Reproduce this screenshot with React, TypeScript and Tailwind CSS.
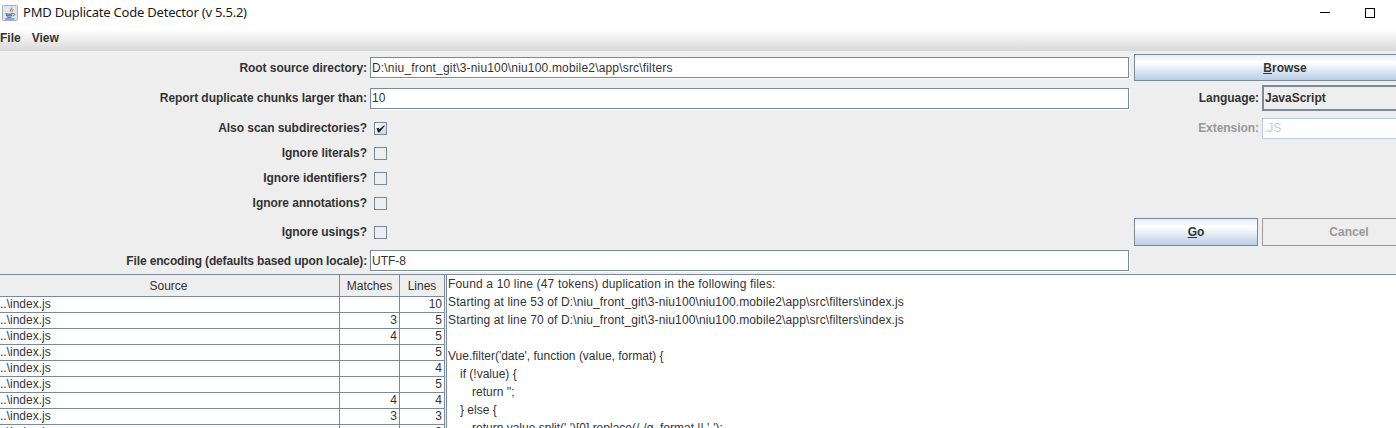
const labelClass = "flex items-center justify-end pr-[3px] text-[12px] font-bold tracking-[-0.05px] text-[#333333]";

const middleChecks = ["Ignore literals?", "Ignore identifiers?", "Ignore annotations?"];

const tableRows = [
  { matches: "", lines: "10" },
  { matches: "3", lines: "5" },
  { matches: "4", lines: "5" },
  { matches: "", lines: "5" },
  { matches: "", lines: "4" },
  { matches: "", lines: "5" },
  { matches: "4", lines: "4" },
  { matches: "3", lines: "3" },
  { matches: "", lines: "3" },
];

function JavaIcon() {
  return (
    <svg width="16" height="16" viewBox="0 0 16 16" className="shrink-0">
      <rect x="0.5" y="0.5" width="15" height="15" rx="1" fill="#dfe6ef" stroke="#9fb0c4" />
      <path d="M9 1.5 C10.5 3.5 6.5 4.5 8.5 7.5 C8 5.5 12 4.5 9 1.5 Z" fill="#e8702a" />
      <path d="M11 4 C11.5 5.5 9.5 6 10.2 7.5" fill="none" stroke="#e8702a" strokeWidth="0.9" />
      <path d="M3.5 8.5 C5 9.5 9 9.5 10.5 8.5 M4 10.2 C6 11 8 11 10 10.2 M5 12 C6.5 12.6 8 12.6 9.5 12" fill="none" stroke="#3f6b9e" strokeWidth="1.1" />
      <path d="M10.5 8.5 C13.5 8 13.5 10.5 10.5 11" fill="none" stroke="#3f6b9e" strokeWidth="0.9" />
      <path d="M3 14 H12.5" stroke="#3f6b9e" strokeWidth="1" />
    </svg>
  );
}

function CheckBox({ checked }: { checked: boolean }) {
  return (
    <span
      className={`flex h-[13px] w-[13px] items-center justify-center border border-[#7a8a99] ${
        checked ? "bg-gradient-to-br from-[#ffffff] to-[#c0d4e8]" : "bg-[#eeeeee]"
      }`}
    >
      {checked ? (
        <svg width="11" height="11" viewBox="0 0 11 11">
          <path d="M1.5 5 L4 5 L4.4 6.2 L9.5 2 L9.5 3.2 L4.4 9.5 L3 9.5 Z" fill="#222222" />
        </svg>
      ) : null}
    </span>
  );
}

function TextField({ value, spacing }: { value: string; spacing?: string }) {
  return (
    <div className={`flex h-[21px] items-center border border-[#7a8a99] bg-white pl-[1px] text-[12px] text-[#333333] shadow-[1px_1px_0_#ffffff] ${spacing ?? ""}`}>
      {value}
    </div>
  );
}

function MetalButton({ children }: { children: React.ReactNode }) {
  return (
    <button className="flex h-full w-full items-center justify-center border border-[#7a8a99] bg-gradient-to-b from-[#e6edf5] via-[#ffffff] via-30% to-[#b8cfe5] text-[12px] font-bold text-[#333333]">
      {children}
    </button>
  );
}

export default function App() {
  return (
    <div className="h-[428px] w-[1396px] overflow-hidden bg-[#eeeeee] font-['Liberation_Sans',Arial,sans-serif]">
      <div className="flex h-[26px] items-center bg-white pb-[1px] pl-[2px]">
        <JavaIcon />
        <span className="ml-[5px] font-['Noto_Sans',sans-serif] text-[13px] tracking-[-0.22px] text-[#1a1a1a]">
          PMD Duplicate Code Detector (v 5.5.2)
        </span>
        <div className="ml-auto flex items-center pr-[21px]">
          <span className="mr-[35px] h-[1px] w-[10px] bg-black" />
          <span className="h-[10px] w-[10px] border border-black" />
        </div>
      </div>

      <div className="flex h-[25px] items-center gap-[11px] border-b border-[#d8d8d8] bg-gradient-to-b from-[#ffffff] from-15% to-[#dadada] pb-[1px] text-[12px] font-bold text-[#333333]">
        <span>File</span>
        <span>View</span>
      </div>

      <div className="grid grid-cols-[370px_764px_128px_174px] grid-rows-[31px_30px_30px_20px_30px_20px_36px_23px] pt-[1px]">
        <div className={labelClass}>Root source directory:</div>
        <div className="flex items-center pr-[5px]">
          <div className="w-full">
            <TextField value="D:\niu_front_git\3-niu100\niu100.mobile2\app\src\filters" spacing="tracking-[0.175px]" />
          </div>
        </div>
        <div className="col-span-2 py-[2px]">
          <MetalButton>
            <span><span className="underline">B</span>rowse</span>
          </MetalButton>
        </div>

        <div className={`${labelClass} tracking-[-0.06px]`}>Report duplicate chunks larger than:</div>
        <div className="flex items-center pr-[5px]">
          <div className="w-full">
            <TextField value="10" />
          </div>
        </div>
        <div className={labelClass}>Language:</div>
        <div className="py-[2px]">
          <div className="flex h-full items-center border-2 border-[#7a8a99] bg-[#eeeeee] pl-[1px] text-[12px] font-bold text-[#333333]">
            JavaScript
          </div>
        </div>

        <div className={labelClass}>Also scan subdirectories?</div>
        <div className="flex items-center pl-[4px]">
          <CheckBox checked />
        </div>
        <div className="flex items-center justify-end pr-[3px] text-[12px] font-bold tracking-[-0.05px] text-[#999999]">Extension:</div>
        <div className="flex items-center">
          <div className="flex h-[21px] w-full items-center border border-[#b8cfe5] bg-white pl-[1px] text-[12px] text-[#b8cfe5]">
            .JS
          </div>
        </div>

        {middleChecks.map((label) => (
          <div key={label} className="col-span-4 grid grid-cols-[370px_1fr]">
            <div className={labelClass}>{label}</div>
            <div className="flex items-center pl-[4px]">
              <CheckBox checked={false} />
            </div>
          </div>
        ))}

        <div className={`${labelClass} pt-[2px]`}>Ignore usings?</div>
        <div className="flex items-center pl-[4px] pt-[2px]">
          <CheckBox checked={false} />
        </div>
        <div className="pb-[3px] pr-[4px] pt-[5px]">
          <MetalButton>
            <span><span className="underline">G</span>o</span>
          </MetalButton>
        </div>
        <div className="pb-[3px] pt-[5px]">
          <div className="flex h-full items-center justify-center border border-[#999999] text-[12px] font-bold text-[#999999]">
            Cancel
          </div>
        </div>

        <div className={`${labelClass} tracking-[-0.14px]`}>File encoding (defaults based upon locale):</div>
        <div className="flex items-center pr-[5px]">
          <div className="w-full">
            <TextField value="UTF-8" />
          </div>
        </div>
      </div>

      <div className="mt-[2px] flex h-[154px] border-t border-[#7a8a99] bg-white">
        <div className="w-[445px] shrink-0 border-r border-[#7a8a99] text-[12px] text-[#333333]">
          <div className="flex h-[22px] border-b border-[#7a8a99] bg-[#eeeeee]">
            <div className="flex w-[340px] items-center justify-center border-r border-[#7a8a99] pr-[2px]">Source</div>
            <div className="flex w-[60px] items-center justify-center border-r border-[#7a8a99]">Matches</div>
            <div className="flex flex-1 items-center justify-center">Lines</div>
          </div>
          {tableRows.map((row, i) => (
            <div key={i} className="flex h-[16px] border-b border-[#7a8a99] leading-[15px]">
              <div className="w-[340px] border-r border-[#7a8a99]">..\index.js</div>
              <div className="w-[60px] border-r border-[#7a8a99] pr-[2px] text-right">{row.matches}</div>
              <div className="flex-1 pr-[2px] text-right">{row.lines}</div>
            </div>
          ))}
        </div>
        <div className="w-[1px] shrink-0 bg-[#eeeeee]" />
        <div className="flex-1 border-l border-[#7a8a99] pl-[1px] text-[12px] leading-[18px] text-[#333333]">
          <div className="tracking-[0.16px]">Found a 10 line (47 tokens) duplication in the following files:</div>
          <div className="tracking-[0.125px]">Starting at line 53 of D:\niu_front_git\3-niu100\niu100.mobile2\app\src\filters\index.js</div>
          <div className="tracking-[0.125px]">Starting at line 70 of D:\niu_front_git\3-niu100\niu100.mobile2\app\src\filters\index.js</div>
          <div className="h-[18px]" />
          <div>Vue.filter('date', function (value, format) {"{"}</div>
          <div className="pl-[12px]">if (!value) {"{"}</div>
          <div className="pl-[24px]">return '';</div>
          <div className="pl-[12px]">{"}"} else {"{"}</div>
          <div className="whitespace-pre pl-[24px]">return value.split(' ')[0].replace(/-/g, format || '-');</div>
        </div>
      </div>
    </div>
  );
}
